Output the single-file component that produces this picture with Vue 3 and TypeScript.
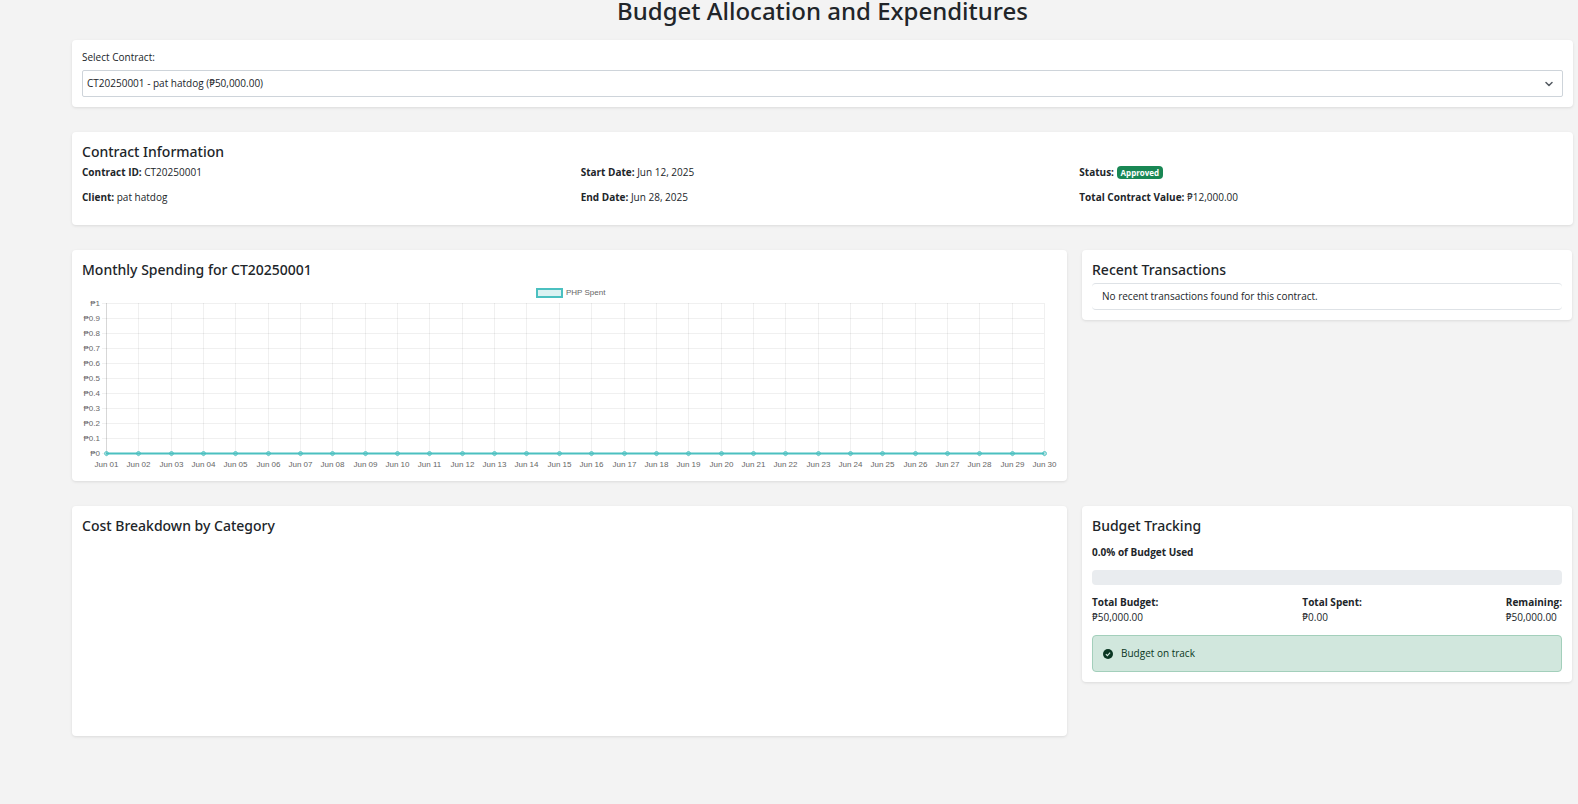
<script setup lang="ts">
import { ref } from 'vue'

interface Contract {
  id: string
  client: string
  budget: string
}

const contracts: Contract[] = [{ id: 'CT20250001', client: 'pat hatdog', budget: '₱50,000.00' }]
const selected = ref<string>('CT20250001')

const plot = { left: 24, right: 962, top: 20, bottom: 170 }
const days = Array.from({ length: 30 }, (_, i) => ({
  x: plot.left + Math.round((i * (plot.right - plot.left)) / 29) + 0.5,
  label: `Jun ${String(i + 1).padStart(2, '0')}`,
}))
const ticks = ['₱1', '₱0.9', '₱0.8', '₱0.7', '₱0.6', '₱0.5', '₱0.4', '₱0.3', '₱0.2', '₱0.1', '₱0'].map(
  (label, i) => ({ label, y: plot.top + i * 15 + 0.5 }),
)

const totals = [
  { label: 'Total Budget:', value: '₱50,000.00' },
  { label: 'Total Spent:', value: '₱0.00' },
  { label: 'Remaining:', value: '₱50,000.00' },
]
const used = 0
</script>

<template>
  <main class="page">
    <h1>Budget Allocation and Expenditures</h1>

    <section class="card picker">
      <label for="contract">Select Contract:</label>
      <select id="contract" v-model="selected">
        <option v-for="c in contracts" :key="c.id" :value="c.id">
          {{ c.id }} - {{ c.client }} ({{ c.budget }})
        </option>
      </select>
    </section>

    <section class="card info">
      <h2>Contract Information</h2>
      <div class="info-grid">
        <p><strong>Contract ID:</strong> CT20250001</p>
        <p><strong>Start Date:</strong> Jun 12, 2025</p>
        <p><strong>Status:</strong> <span class="badge">Approved</span></p>
        <p><strong>Client:</strong> pat hatdog</p>
        <p><strong>End Date:</strong> Jun 28, 2025</p>
        <p><strong>Total Contract Value:</strong> ₱12,000.00</p>
      </div>
    </section>

    <div class="row">
      <section class="card">
        <h2>Monthly Spending for CT20250001</h2>
        <svg class="chart" viewBox="0 0 975 188" role="img" aria-label="Monthly spending">
          <rect x="455" y="6" width="25" height="8" fill="#dbf2f2" stroke="#4bc0c0" stroke-width="2" />
          <text x="484" y="12">PHP Spent</text>
          <g stroke="#000" stroke-opacity="0.1">
            <line v-for="t in ticks" :key="t.label" x1="20" :x2="plot.right" :y1="t.y" :y2="t.y" stroke-opacity="0.06" />
            <line v-for="d in days" :key="d.label" :x1="d.x" :x2="d.x" :y1="plot.top" y2="174" stroke-opacity="0.06" />
            <line x1="24.5" x2="24.5" :y1="plot.top" :y2="plot.bottom" />
          </g>
          <text v-for="t in ticks" :key="t.label" x="18" :y="t.y + 2" text-anchor="end">{{ t.label }}</text>
          <text v-for="d in days" :key="d.label" :x="d.x" y="184" text-anchor="middle">{{ d.label }}</text>
          <line :x1="plot.left" :x2="plot.right" y1="170.5" y2="170.5" stroke="#4bc0c0" stroke-width="2" />
          <circle
            v-for="d in days"
            :key="d.label"
            :cx="d.x"
            cy="170.5"
            r="2"
            fill="#4bc0c0"
            fill-opacity="0.4"
            stroke="#4bc0c0"
            stroke-opacity="0.8"
          />
        </svg>
      </section>

      <section class="card">
        <h2>Recent Transactions</h2>
        <ul class="list">
          <li>No recent transactions found for this contract.</li>
        </ul>
      </section>
    </div>

    <div class="row">
      <section class="card breakdown">
        <h2>Cost Breakdown by Category</h2>
      </section>

      <section class="card">
        <h2>Budget Tracking</h2>
        <p class="used"><strong>0.0% of Budget Used</strong></p>
        <div class="progress" role="progressbar" aria-label="Budget used" :aria-valuenow="used">
          <div class="bar" :style="{ width: used + '%' }"></div>
        </div>
        <div class="totals">
          <div v-for="t in totals" :key="t.label">
            <strong>{{ t.label }}</strong><br />{{ t.value }}
          </div>
        </div>
        <div class="alert" role="status">
          <svg viewBox="0 0 16 16" aria-hidden="true">
            <circle cx="8" cy="8" r="8" fill="currentColor" />
            <path d="M4.6 8.3 7 10.7 11.4 5.8" fill="none" stroke="#d1e7dd" stroke-width="1.8" />
          </svg>
          <span>Budget on track</span>
        </div>
      </section>
    </div>
  </main>
</template>

<style>
body {
  background: #f3f3f3;
}
</style>

<style scoped>
.page {
  box-sizing: border-box;
  padding: 0 5px 24px 72px;
  font: 10px/15px 'Segoe UI', 'Open Sans', 'Noto Sans', sans-serif;
  color: #212529;
}

h1,
h2,
p {
  margin: 0;
}

h1,
h2 {
  font-family: 'Segoe UI', 'Noto Sans', sans-serif;
  font-weight: 500;
}

h1 {
  height: 40px;
  font-size: 24px;
  line-height: 22px;
  text-align: center;
}

h2 {
  margin-bottom: 4px;
  font-size: 14px;
  line-height: 19px;
}

strong {
  font-weight: 700;
}

.card {
  box-sizing: border-box;
  padding: 10px;
  background: #fff;
  border-radius: 4px;
  box-shadow: 0 1px 3px rgba(0, 0, 0, 0.1);
}

.picker,
.info {
  margin-bottom: 25px;
}

.picker label {
  display: block;
  margin-bottom: 5px;
}

select {
  display: block;
  box-sizing: border-box;
  width: 100%;
  height: 27px;
  padding: 0 24px 0 4px;
  font: inherit;
  color: inherit;
  appearance: none;
  border: 1px solid #ced4da;
  border-radius: 2px;
  background: #fff
    url("data:image/svg+xml,%3Csvg xmlns='http://www.w3.org/2000/svg' viewBox='0 0 16 16'%3E%3Cpath fill='none' stroke='%23555b62' stroke-linecap='round' stroke-linejoin='round' stroke-width='3' d='m2 5 6 6 6-6'/%3E%3C/svg%3E")
    no-repeat right 9px center / 8px 8px;
}

.info-grid {
  display: grid;
  grid-template-columns: repeat(3, 1fr);
  column-gap: 15px;
}

.info-grid p {
  height: 15px;
  margin-bottom: 10px;
}

.badge {
  display: inline-block;
  padding: 3px 4px;
  font-size: 8px;
  line-height: 7px;
  font-weight: 700;
  color: #fff;
  background: #198754;
  border-radius: 4px;
}

.row {
  display: grid;
  grid-template-columns: 995fr 490fr;
  gap: 15px;
  align-items: start;
  margin-bottom: 25px;
  padding-right: 1px;
}

.chart {
  display: block;
  width: 100%;
}

.chart text {
  font: 8px 'Liberation Sans', Arial, sans-serif;
  fill: #666;
}

.list {
  margin: 0;
  padding: 0;
  list-style: none;
}

.list li {
  padding: 5px 10px;
  border: 1px solid #dee2e6;
  border-width: 1px 0;
  border-radius: 4px;
}

.breakdown {
  min-height: 230px;
}

.used {
  margin: 10px 0;
}

.progress {
  height: 15px;
  overflow: hidden;
  background: #e9ecef;
  border-radius: 4px;
}

.bar {
  height: 100%;
  background: #198754;
}

.totals {
  display: flex;
  justify-content: space-between;
  margin: 10px 0;
}

.alert {
  display: flex;
  align-items: center;
  gap: 8px;
  padding: 10px;
  color: #0a3622;
  background: #d1e7dd;
  border: 1px solid #a3cfbb;
  border-radius: 4px;
}

.alert svg {
  width: 10px;
  height: 10px;
}
</style>
